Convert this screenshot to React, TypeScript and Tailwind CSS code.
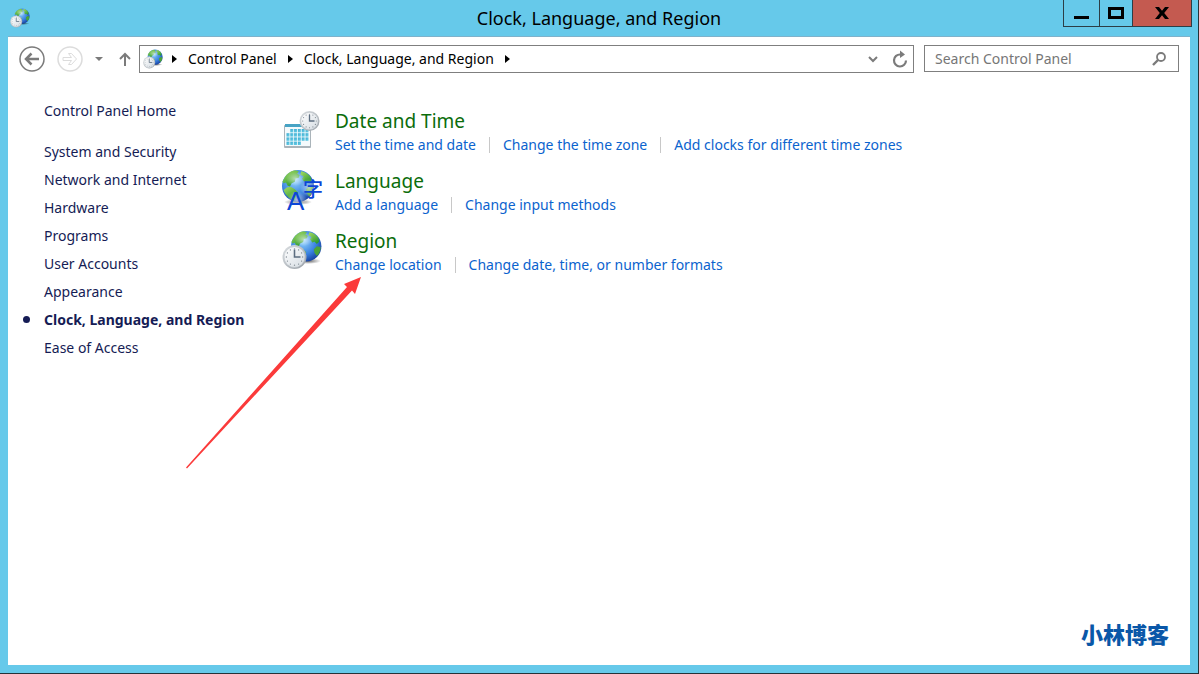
import type { ReactNode } from 'react'

const SIDEBAR_LINKS = [
  'System and Security',
  'Network and Internet',
  'Hardware',
  'Programs',
  'User Accounts',
  'Appearance',
  'Clock, Language, and Region',
  'Ease of Access',
]

const CURRENT = 'Clock, Language, and Region'

function ClockFace({ cx, cy, r }: { cx: number; cy: number; r: number }) {
  const ticks = Array.from({ length: 12 }, (_, i) => (i * Math.PI) / 6)
  return (
    <g>
      <circle cx={cx} cy={cy} r={r} fill="url(#clock-rim)" />
      <circle cx={cx} cy={cy} r={r * 0.86} fill="url(#clock-dial)" stroke="#c3c9ce" strokeWidth="0.5" />
      {ticks.map((a) => (
        <circle
          key={a}
          cx={cx + Math.sin(a) * r * 0.68}
          cy={cy - Math.cos(a) * r * 0.68}
          r={r * 0.055}
          fill="#7d8790"
        />
      ))}
      <path
        d={`M${cx} ${cy - r * 0.62}V${cy}H${cx + r * 0.5}`}
        fill="none"
        stroke="#5c6d80"
        strokeWidth={r * 0.13}
      />
    </g>
  )
}

/* 40x40 unit globe, placed with a transform by the icons below */
function Globe() {
  return (
    <g>
      <circle cx="20" cy="20" r="20" fill="url(#globe-sea)" />
      <path
        d="M3 10C6 5 11 1 17 .4l4 1.2-2 3 3 1.5-1 3.5-4 1-1 4-4 2-2 4-3-1-2-4-3 1-1.5-2z"
        fill="url(#globe-land)"
      />
      <path d="M24 1.5c5 .5 9 3.500 12 7.500l1 5-3 3-3-3-3 1-3-4 2-3-4-2z" fill="url(#globe-land)" />
      <path d="M6 22l5-1 5 3 4 4-2 5-3 5.500C9 36 4 31 2 25z" fill="url(#globe-land)" />
      <path d="M34 20l5 1c0 5-2 9-5 12l-3-4-1-5z" fill="#4aa33a" />
      <ellipse cx="17" cy="11" rx="12" ry="9" fill="url(#globe-shine)" />
    </g>
  )
}

function IconDefs() {
  return (
    <svg className="absolute size-0" aria-hidden="true">
      <defs>
        <radialGradient id="globe-sea" cx="0.4" cy="0.35" r="0.7">
          <stop offset="0" stopColor="#8fd0fb" />
          <stop offset="0.6" stopColor="#3b83e0" />
          <stop offset="1" stopColor="#163e9c" />
        </radialGradient>
        <linearGradient id="globe-land" x1="0" y1="0" x2="0.6" y2="1">
          <stop offset="0" stopColor="#a6dc62" />
          <stop offset="1" stopColor="#2f9a33" />
        </linearGradient>
        <radialGradient id="globe-shine">
          <stop offset="0" stopColor="#fff" stopOpacity="0.6" />
          <stop offset="1" stopColor="#fff" stopOpacity="0" />
        </radialGradient>
        <radialGradient id="icon-shadow">
          <stop offset="0" stopColor="#000" stopOpacity="0.6" />
          <stop offset="1" stopColor="#000" stopOpacity="0" />
        </radialGradient>
        <linearGradient id="clock-rim" x1="0" y1="0" x2="1" y2="1">
          <stop offset="0" stopColor="#dde1e4" />
          <stop offset="1" stopColor="#989fa6" />
        </linearGradient>
        <linearGradient id="clock-dial" x1="0" y1="0" x2="1" y2="1">
          <stop offset="0" stopColor="#fff" />
          <stop offset="1" stopColor="#d5dce2" />
        </linearGradient>
        <linearGradient id="calendar-days" x1="0" y1="0" x2="1" y2="1">
          <stop offset="0" stopColor="#3aa9cf" />
          <stop offset="1" stopColor="#6fd3ea" />
        </linearGradient>
      </defs>
    </svg>
  )
}

function RegionIcon({ className }: { className: string }) {
  return (
    <svg viewBox="0 0 40 40" className={className} aria-hidden="true">
      <ellipse cx="26" cy="31" rx="13" ry="3" fill="url(#icon-shadow)" />
      <g transform="translate(9 1) scale(0.76)">
        <Globe />
      </g>
      <ClockFace cx={12.5} cy={27} r={12} />
    </svg>
  )
}

function LanguageIcon() {
  return (
    <svg viewBox="0 0 40 40" className="size-10 overflow-visible" aria-hidden="true">
      <ellipse cx="16" cy="32" rx="14" ry="3" fill="url(#icon-shadow)" />
      <g transform="scale(0.8)">
        <Globe />
      </g>
      {/* pale halo keeps the letters apart from the sea */}
      <ellipse cx="15" cy="30" rx="10" ry="9" fill="url(#globe-shine)" />
      <ellipse cx="27" cy="18" rx="9" ry="9" fill="url(#globe-shine)" />
      <text x="5" y="40" fontFamily="Liberation Sans, sans-serif" fontSize="26" fill="#0c46d6">
        A
      </text>
      <text x="21" y="27" fontFamily="Noto Sans CJK SC, sans-serif" fontSize="20" fontWeight="500" fill="#0c46d6">
        字
      </text>
    </svg>
  )
}

function DateTimeIcon() {
  return (
    <svg viewBox="0 0 40 40" className="size-10" aria-hidden="true">
      <rect x="2" y="15" width="27" height="23" rx="1" fill="#aab4ba" />
      <rect x="3" y="16" width="25" height="20" fill="#f4fafc" />
      <rect x="3" y="14" width="25" height="3" fill="#47a3c4" />
      {[0, 1, 2, 3].map((row) =>
        [0, 1, 2, 3, 4, 5].map((col) =>
          (row === 0 && col < 1) || (row === 3 && col > 3) ? null : (
            <rect
              key={`${row}-${col}`}
              x={4.5 + col * 3.8}
              y={19 + row * 4.2}
              width="3"
              height="3.4"
              fill="url(#calendar-days)"
            />
          ),
        ),
      )}
      <ClockFace cx={27.5} cy={11} r={10} />
    </svg>
  )
}

const CATEGORIES: { title: string; icon: ReactNode; tasks: string[] }[] = [
  {
    title: 'Date and Time',
    icon: <DateTimeIcon />,
    tasks: ['Set the time and date', 'Change the time zone', 'Add clocks for different time zones'],
  },
  {
    title: 'Language',
    icon: <LanguageIcon />,
    tasks: ['Add a language', 'Change input methods'],
  },
  {
    title: 'Region',
    icon: <RegionIcon className="size-10" />,
    tasks: ['Change location', 'Change date, time, or number formats'],
  },
]

function TitleBar() {
  return (
    <header className="grid grid-cols-[1fr_auto_1fr] items-start h-9">
      <RegionIcon className="size-5 ml-[10px] mt-2" />
      <h1 className="text-lg leading-9">Clock, Language, and Region</h1>
      <div className="flex justify-self-end h-[27px] mr-[6px] border border-t-0 border-[#2c3e46] divide-x divide-[#2c3e46]">
        <button aria-label="Minimize" className="w-9 flex justify-center items-end pb-[7px]">
          <span className="w-[15px] h-[3px] bg-black" />
        </button>
        <button aria-label="Maximize" className="w-[33px] flex justify-center items-center">
          <span className="w-4 h-3 border-3 border-black" />
        </button>
        <button aria-label="Close" className="w-[58px] bg-[#c45a50] flex justify-center items-center">
          <svg viewBox="0 0 14 12" className="w-[14px] h-3" aria-hidden="true">
            <path d="M0 0h4l3 3.800L10 0h4L9.200 6l4.800 6h-4L7 8.200 4 12H0l4.800-6z" fill="#000" />
          </svg>
        </button>
      </div>
    </header>
  )
}

function Crumb({ label }: { label?: string }) {
  return (
    <li className="flex items-center">
      {label && (
        <a href="#" className="mr-[11px]">
          {label}
        </a>
      )}
      <svg viewBox="0 0 5 8" className="w-[5px] h-2 mr-[11px]" aria-hidden="true">
        <path d="M0 0l5 4-5 4z" fill="#000" />
      </svg>
    </li>
  )
}

function Toolbar() {
  return (
    <div className="flex items-center pl-[11px] pr-[11px] pt-2">
      <button aria-label="Back" className="mr-3">
        <svg viewBox="0 0 26 26" className="size-[26px]" fill="none" stroke="#7b7b7b" aria-hidden="true">
          <circle cx="13" cy="13" r="12" strokeWidth="1.5" />
          <path d="M20 13H8M12.5 7.500L7 13l5.500 5.500" strokeWidth="2.5" />
        </svg>
      </button>
      <button aria-label="Forward" className="mr-3" disabled>
        <svg viewBox="0 0 26 26" className="size-[26px]" fill="none" stroke="#dcdcdc" aria-hidden="true">
          <circle cx="13" cy="13" r="12" strokeWidth="1.5" />
          <path d="M6 11.500h8.500l-3-4h3l5 5.500-5 5.500h-3l3-4H6z" />
        </svg>
      </button>
      <button aria-label="Recent locations" className="mr-4">
        <svg viewBox="0 0 8 4" className="w-2 h-1" aria-hidden="true">
          <path d="M0 0h8L4 4z" fill="#7b7b7b" />
        </svg>
      </button>
      <button aria-label="Up" className="mr-2">
        <svg viewBox="0 0 12 14" className="w-3 h-[14px]" fill="none" stroke="#7b7b7b" strokeWidth="2" aria-hidden="true">
          <path d="M6 14V2M1 7l5-5 5 5" />
        </svg>
      </button>
      <nav className="flex flex-1 items-center h-7 border border-[#7f7f7f] pl-[3px]" aria-label="Address">
        <RegionIcon className="size-5" />
        <ol className="flex flex-1 ml-[9px]">
          <Crumb />
          <Crumb label="Control Panel" />
          <Crumb label="Clock, Language, and Region" />
        </ol>
        <button aria-label="Previous locations" className="mr-[14px]">
          <svg viewBox="0 0 10 7" className="w-[10px] h-[7px]" fill="none" stroke="#7b7b7b" strokeWidth="2" aria-hidden="true">
            <path d="M1 1l4 4 4-4" />
          </svg>
        </button>
        <button aria-label="Refresh" className="mr-[5px]">
          <svg viewBox="0 0 16 18" className="w-4 h-[18px]" aria-hidden="true">
            <path d="M8.500 4.500A6 6 0 1 0 14 10.500" fill="none" stroke="#7b7b7b" strokeWidth="2.2" />
            <path d="M8 .5v7.500l5-3.500z" fill="#7b7b7b" />
          </svg>
        </button>
      </nav>
      <div className="flex items-center self-start w-[255px] h-[27px] ml-[10px] border border-[#7f7f7f] pl-[10px] pr-3">
        <input
          type="search"
          aria-label="Search Control Panel"
          placeholder="Search Control Panel"
          className="flex-1 min-w-0 h-full outline-none placeholder:text-[#767676]"
        />
        <svg viewBox="0 0 14 14" className="size-[14px]" fill="none" stroke="#7b7b7b" aria-hidden="true">
          <circle cx="9" cy="5" r="4" strokeWidth="1.8" />
          <path d="M6 8L1 13" strokeWidth="2.4" />
        </svg>
      </div>
    </div>
  )
}

function Sidebar() {
  return (
    <nav className="w-[238px] shrink-0 text-[#151c55]" aria-label="Control Panel">
      <a href="#" className="block leading-7 mb-[13px]">
        Control Panel Home
      </a>
      <ul>
        {SIDEBAR_LINKS.map((label) => (
          <li key={label} className="relative leading-7">
            {label === CURRENT && (
              <span className="absolute -left-[21px] top-[10px] size-[7px] rounded-full bg-[#151c55]" />
            )}
            <a href="#" className={label === CURRENT ? 'font-bold' : ''}>
              {label}
            </a>
          </li>
        ))}
      </ul>
    </nav>
  )
}

/* Red pointer aimed at "Change location" */
function Pointer() {
  return (
    <svg
      viewBox="0 0 175 192"
      className="absolute -left-24 top-[50px] w-[175px] h-48 pointer-events-none"
      aria-hidden="true"
    >
      <path d="M175 0l-6 17-3-3.500L1 191.500l-1-1L161 10l-3-3z" fill="#fb3a3a" />
    </svg>
  )
}

export default function App() {
  return (
    <div className="min-h-screen flex flex-col bg-[#66c9ea] border-r border-b border-[#263238] font-['Noto_Sans',sans-serif] text-sm text-black">
      <IconDefs />
      <TitleBar />
      <div className="flex-1 flex flex-col mx-2 mb-2 border-t border-[#7fb2cb] bg-white">
        <Toolbar />
        <div className="flex flex-1 pl-9 pt-6">
          <Sidebar />
          <main className="pt-[10px]">
            {CATEGORIES.map(({ title, icon, tasks }) => (
              <section key={title} className="relative flex h-[60px]">
                <div className="pt-[3px]">{icon}</div>
                <div className="ml-[13px]">
                  <h2 className="text-[19px] leading-7 text-[#0b6d0b]">
                    <a href="#">{title}</a>
                  </h2>
                  <ul className="flex items-center mt-[2px] leading-6 divide-x divide-[#c8c8c8] text-[#0b63ce]">
                    {tasks.map((task) => (
                      <li key={task} className="leading-4 px-[13px] first:pl-0">
                        <a href="#">{task}</a>
                      </li>
                    ))}
                  </ul>
                </div>
                {title === 'Region' && <Pointer />}
              </section>
            ))}
          </main>
        </div>
        <p className="self-end mr-[21px] mb-4 text-[22px] leading-8 font-black font-['Noto_Sans_CJK_SC',sans-serif] text-[#0a57a8]">
          小林博客
        </p>
      </div>
    </div>
  )
}
